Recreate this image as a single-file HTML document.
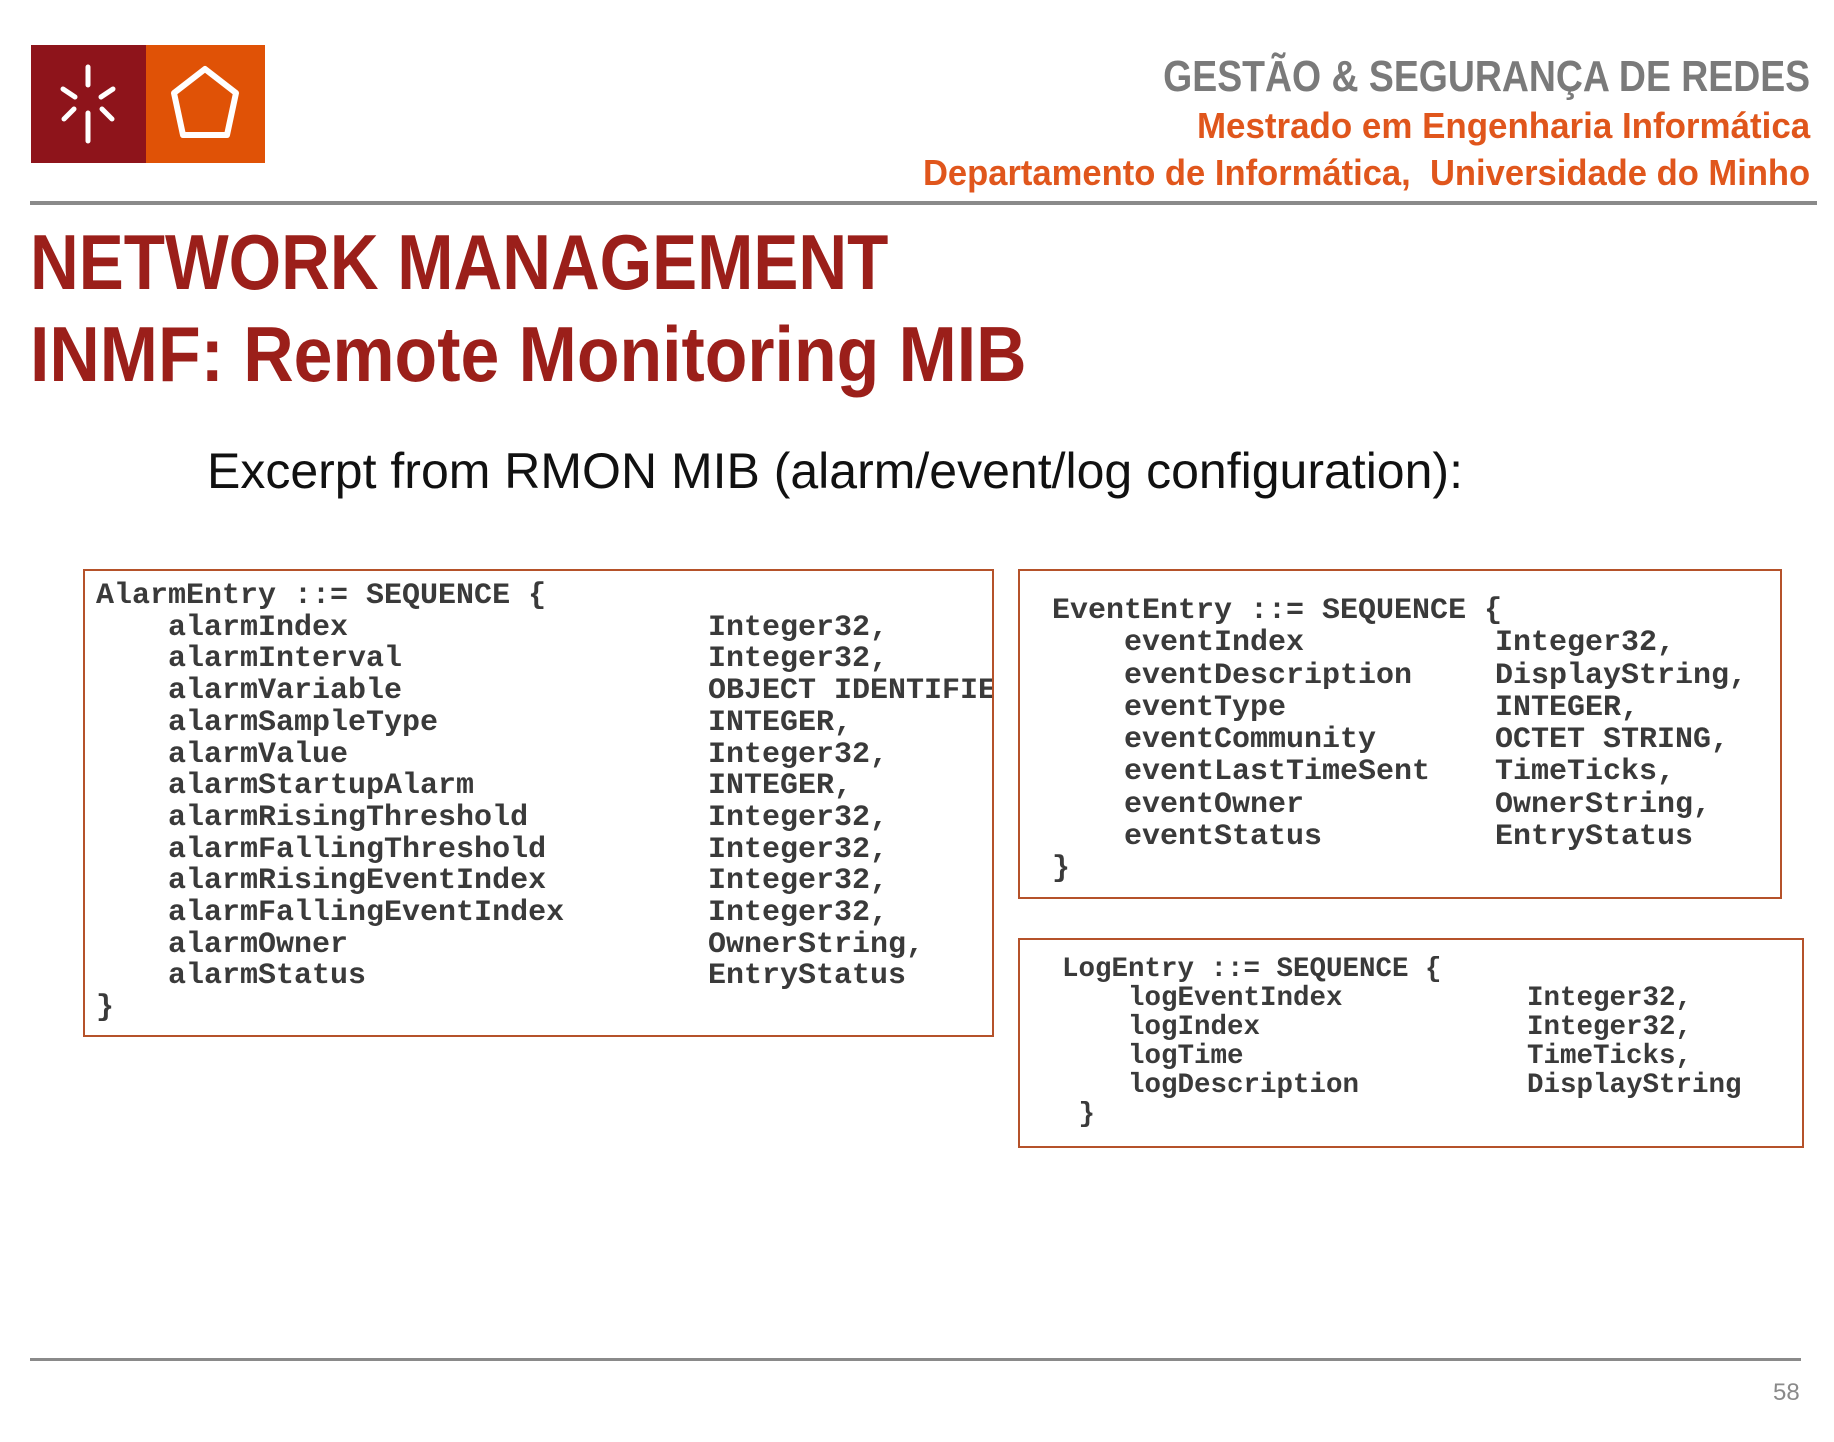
<!DOCTYPE html>
<html><head><meta charset="utf-8"><style>
body{margin:0;width:1834px;height:1442px;background:#fff;position:relative;overflow:hidden;font-family:"Liberation Sans",sans-serif}
.a{position:absolute;white-space:nowrap}
.hd{right:24px;font-weight:bold;transform-origin:right center;text-align:right}
.t{left:30px;color:#9b1f1a;font-weight:bold;font-size:78px;transform-origin:left center}
.box{position:absolute;border:2px solid #b5522a;overflow:hidden;box-sizing:border-box}
.c{position:absolute;font-family:"Liberation Mono",monospace;font-weight:bold;color:#3a3a3a;white-space:pre;line-height:1}
</style></head><body>
<svg class="a" style="left:31px;top:45px" width="234" height="118" viewBox="0 0 234 118">
<rect x="0" y="0" width="115" height="118" fill="#8e141b"/>
<rect x="115" y="0" width="119" height="118" fill="#e05206"/>
<g stroke="#fff" stroke-width="5" stroke-linecap="round" fill="none">
<line x1="57" y1="22" x2="57" y2="40"/>
<line x1="57" y1="68" x2="57" y2="96"/>
<line x1="32" y1="44" x2="44" y2="52"/>
<line x1="82" y1="44" x2="70" y2="52"/>
<line x1="33" y1="74" x2="43" y2="64"/>
<line x1="81" y1="74" x2="71" y2="64"/>
<polygon points="174,24 205,48 196,90 152,90 143,48" stroke-width="6" stroke-linejoin="round"/>
</g>
</svg>
<div class="a hd" style="top:52px;font-size:44px;color:#7a7a7a;transform:scaleX(0.85)">GESTÃO &amp; SEGURANÇA DE REDES</div>
<div class="a hd" style="top:105px;font-size:36px;color:#e0561c;transform:scaleX(0.97)">Mestrado em Engenharia Informática</div>
<div class="a hd" style="top:152px;font-size:36px;color:#e0561c;transform:scaleX(0.96)">Departamento de Informática,&nbsp; Universidade do Minho</div>
<div class="a" style="left:30px;top:201px;width:1787px;height:4px;background:#8a8a8a"></div>
<div class="a t" style="top:217px;transform:scaleX(0.865)">NETWORK MANAGEMENT</div>
<div class="a t" style="top:309px;transform:scaleX(0.895)">INMF: Remote Monitoring MIB</div>
<div class="a" style="left:207px;top:442px;font-size:50px;color:#111">Excerpt from RMON MIB (alarm/event/log configuration):</div>

<div class="box" style="left:83px;top:569px;width:911px;height:468px">
<div class="c" style="left:11px;top:10px;font-size:30px;line-height:31.7px">AlarmEntry ::= SEQUENCE {
    alarmIndex
    alarmInterval
    alarmVariable
    alarmSampleType
    alarmValue
    alarmStartupAlarm
    alarmRisingThreshold
    alarmFallingThreshold
    alarmRisingEventIndex
    alarmFallingEventIndex
    alarmOwner
    alarmStatus
}</div>
<div class="c" style="left:623px;top:41.7px;font-size:30px;line-height:31.7px">Integer32,
Integer32,
OBJECT IDENTIFIER,
INTEGER,
Integer32,
INTEGER,
Integer32,
Integer32,
Integer32,
Integer32,
OwnerString,
EntryStatus</div>
</div>

<div class="box" style="left:1018px;top:569px;width:764px;height:330px">
<div class="c" style="left:32px;top:24px;font-size:30px;line-height:32.3px">EventEntry ::= SEQUENCE {
    eventIndex
    eventDescription
    eventType
    eventCommunity
    eventLastTimeSent
    eventOwner
    eventStatus
}</div>
<div class="c" style="left:475px;top:56.3px;font-size:30px;line-height:32.3px">Integer32,
DisplayString,
INTEGER,
OCTET STRING,
TimeTicks,
OwnerString,
EntryStatus</div>
</div>

<div class="box" style="left:1018px;top:938px;width:786px;height:210px">
<div class="c" style="left:42px;top:15px;font-size:27.5px;line-height:29px">LogEntry ::= SEQUENCE {
    logEventIndex
    logIndex
    logTime
    logDescription
 }</div>
<div class="c" style="left:507px;top:44px;font-size:27.5px;line-height:29px">Integer32,
Integer32,
TimeTicks,
DisplayString</div>
</div>

<div class="a" style="left:30px;top:1358px;width:1771px;height:3px;background:#8a8a8a"></div>
<div class="a" style="left:1773px;top:1379px;font-size:24px;color:#8a8a8a">58</div>
</body></html>
